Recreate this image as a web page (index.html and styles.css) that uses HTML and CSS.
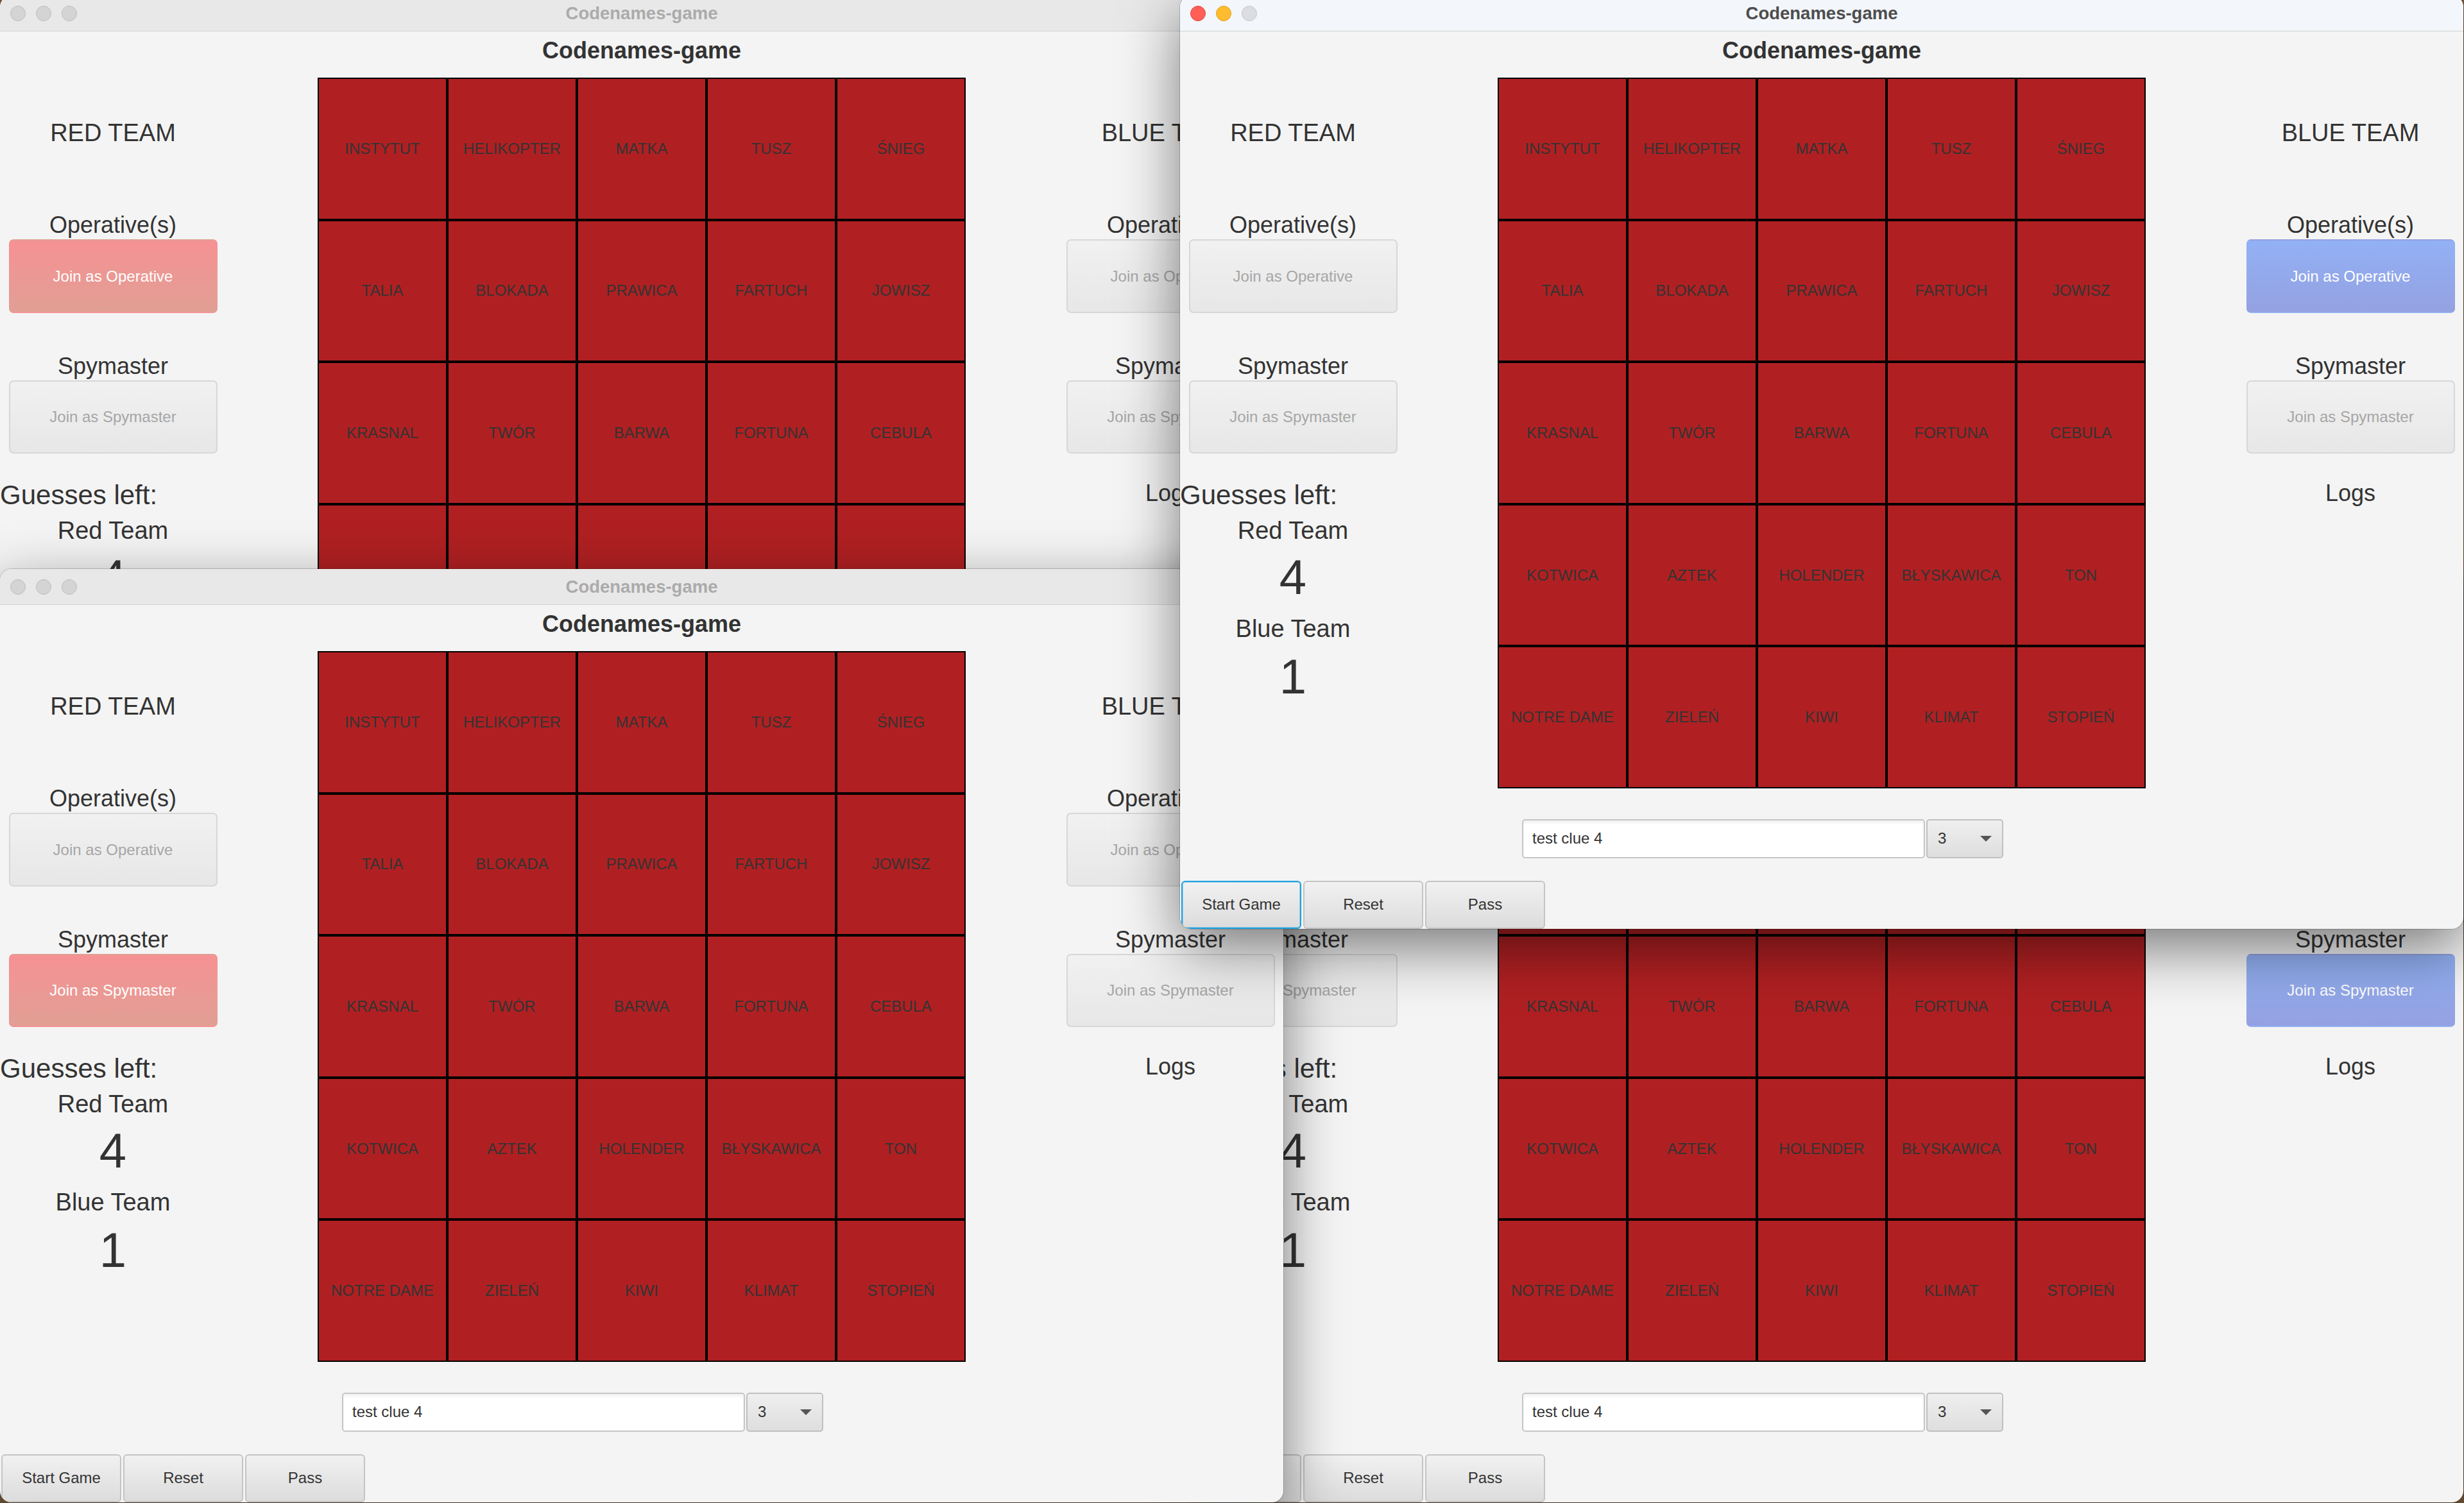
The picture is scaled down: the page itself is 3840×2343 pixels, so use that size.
FILE: index.html
```html
<!DOCTYPE html>
<html lang="pl">
<head>
<meta charset="utf-8">
<title>Codenames-game</title>
<link rel="stylesheet" href="styles.css">
</head>
<body>

<!-- Window A (back, top-left) -->
<div class="win win-a">
  <div class="titlebar">
    <div class="lights"><span class="light"></span><span class="light"></span><span class="light"></span></div>
    <div class="title">Codenames-game</div>
  </div>
  <div class="content">
    <div class="heading">Codenames-game</div>
    <div class="main">
      <div class="side">
        <div class="team">RED TEAM</div>
        <div class="label op-label">Operative(s)</div>
        <div class="join join--red">Join as Operative</div>
        <div class="label spy-label">Spymaster</div>
        <div class="join">Join as Spymaster</div>
        <div class="guesses">Guesses left:</div>
        <div class="label gt gt-red">Red Team</div>
        <div class="count count-red">4</div>
        <div class="label gt gt-blue">Blue Team</div>
        <div class="count count-blue">1</div>
      </div>
      <div class="board">
        <div class="cell">INSTYTUT</div><div class="cell">HELIKOPTER</div><div class="cell">MATKA</div><div class="cell">TUSZ</div><div class="cell">ŚNIEG</div>
        <div class="cell">TALIA</div><div class="cell">BLOKADA</div><div class="cell">PRAWICA</div><div class="cell">FARTUCH</div><div class="cell">JOWISZ</div>
        <div class="cell">KRASNAL</div><div class="cell">TWÓR</div><div class="cell">BARWA</div><div class="cell">FORTUNA</div><div class="cell">CEBULA</div>
        <div class="cell">KOTWICA</div><div class="cell">AZTEK</div><div class="cell">HOLENDER</div><div class="cell">BŁYSKAWICA</div><div class="cell">TON</div>
        <div class="cell">NOTRE DAME</div><div class="cell">ZIELEŃ</div><div class="cell">KIWI</div><div class="cell">KLIMAT</div><div class="cell">STOPIEŃ</div>
      </div>
      <div class="side">
        <div class="team">BLUE TEAM</div>
        <div class="label op-label">Operative(s)</div>
        <div class="join">Join as Operative</div>
        <div class="label spy-label">Spymaster</div>
        <div class="join">Join as Spymaster</div>
        <div class="label logs">Logs</div>
      </div>
    </div>
    <div class="clue">
      <div class="clue-input">test clue 4</div>
      <div class="combo"><span>3</span><span class="arrow"></span></div>
    </div>
    <div class="actions">
      <div class="act">Start Game</div><div class="act">Reset</div><div class="act">Pass</div>
    </div>
  </div>
</div>

<!-- Window D (bottom-right) -->
<div class="win win-d">
  <div class="titlebar">
    <div class="lights"><span class="light"></span><span class="light"></span><span class="light"></span></div>
    <div class="title">Codenames-game</div>
  </div>
  <div class="content">
    <div class="heading">Codenames-game</div>
    <div class="main">
      <div class="side">
        <div class="team">RED TEAM</div>
        <div class="label op-label">Operative(s)</div>
        <div class="join">Join as Operative</div>
        <div class="label spy-label">Spymaster</div>
        <div class="join">Join as Spymaster</div>
        <div class="guesses">Guesses left:</div>
        <div class="label gt gt-red">Red Team</div>
        <div class="count count-red">4</div>
        <div class="label gt gt-blue">Blue Team</div>
        <div class="count count-blue">1</div>
      </div>
      <div class="board">
        <div class="cell">INSTYTUT</div><div class="cell">HELIKOPTER</div><div class="cell">MATKA</div><div class="cell">TUSZ</div><div class="cell">ŚNIEG</div>
        <div class="cell">TALIA</div><div class="cell">BLOKADA</div><div class="cell">PRAWICA</div><div class="cell">FARTUCH</div><div class="cell">JOWISZ</div>
        <div class="cell">KRASNAL</div><div class="cell">TWÓR</div><div class="cell">BARWA</div><div class="cell">FORTUNA</div><div class="cell">CEBULA</div>
        <div class="cell">KOTWICA</div><div class="cell">AZTEK</div><div class="cell">HOLENDER</div><div class="cell">BŁYSKAWICA</div><div class="cell">TON</div>
        <div class="cell">NOTRE DAME</div><div class="cell">ZIELEŃ</div><div class="cell">KIWI</div><div class="cell">KLIMAT</div><div class="cell">STOPIEŃ</div>
      </div>
      <div class="side">
        <div class="team">BLUE TEAM</div>
        <div class="label op-label">Operative(s)</div>
        <div class="join">Join as Operative</div>
        <div class="label spy-label">Spymaster</div>
        <div class="join join--blue">Join as Spymaster</div>
        <div class="label logs">Logs</div>
      </div>
    </div>
    <div class="clue">
      <div class="clue-input">test clue 4</div>
      <div class="combo"><span>3</span><span class="arrow"></span></div>
    </div>
    <div class="actions">
      <div class="act">Start Game</div><div class="act">Reset</div><div class="act">Pass</div>
    </div>
  </div>
</div>

<!-- Window C (bottom-left) -->
<div class="win win-c">
  <div class="titlebar">
    <div class="lights"><span class="light"></span><span class="light"></span><span class="light"></span></div>
    <div class="title">Codenames-game</div>
  </div>
  <div class="content">
    <div class="heading">Codenames-game</div>
    <div class="main">
      <div class="side">
        <div class="team">RED TEAM</div>
        <div class="label op-label">Operative(s)</div>
        <div class="join">Join as Operative</div>
        <div class="label spy-label">Spymaster</div>
        <div class="join join--red">Join as Spymaster</div>
        <div class="guesses">Guesses left:</div>
        <div class="label gt gt-red">Red Team</div>
        <div class="count count-red">4</div>
        <div class="label gt gt-blue">Blue Team</div>
        <div class="count count-blue">1</div>
      </div>
      <div class="board">
        <div class="cell">INSTYTUT</div><div class="cell">HELIKOPTER</div><div class="cell">MATKA</div><div class="cell">TUSZ</div><div class="cell">ŚNIEG</div>
        <div class="cell">TALIA</div><div class="cell">BLOKADA</div><div class="cell">PRAWICA</div><div class="cell">FARTUCH</div><div class="cell">JOWISZ</div>
        <div class="cell">KRASNAL</div><div class="cell">TWÓR</div><div class="cell">BARWA</div><div class="cell">FORTUNA</div><div class="cell">CEBULA</div>
        <div class="cell">KOTWICA</div><div class="cell">AZTEK</div><div class="cell">HOLENDER</div><div class="cell">BŁYSKAWICA</div><div class="cell">TON</div>
        <div class="cell">NOTRE DAME</div><div class="cell">ZIELEŃ</div><div class="cell">KIWI</div><div class="cell">KLIMAT</div><div class="cell">STOPIEŃ</div>
      </div>
      <div class="side">
        <div class="team">BLUE TEAM</div>
        <div class="label op-label">Operative(s)</div>
        <div class="join">Join as Operative</div>
        <div class="label spy-label">Spymaster</div>
        <div class="join">Join as Spymaster</div>
        <div class="label logs">Logs</div>
      </div>
    </div>
    <div class="clue">
      <div class="clue-input">test clue 4</div>
      <div class="combo"><span>3</span><span class="arrow"></span></div>
    </div>
    <div class="actions">
      <div class="act">Start Game</div><div class="act">Reset</div><div class="act">Pass</div>
    </div>
  </div>
</div>

<!-- Window B (front, active, top-right) -->
<div class="win win-b win--active">
  <div class="titlebar">
    <div class="lights"><span class="light light--close"></span><span class="light light--min"></span><span class="light light--zoom"></span></div>
    <div class="title">Codenames-game</div>
  </div>
  <div class="content">
    <div class="heading">Codenames-game</div>
    <div class="main">
      <div class="side">
        <div class="team">RED TEAM</div>
        <div class="label op-label">Operative(s)</div>
        <div class="join">Join as Operative</div>
        <div class="label spy-label">Spymaster</div>
        <div class="join">Join as Spymaster</div>
        <div class="guesses">Guesses left:</div>
        <div class="label gt gt-red">Red Team</div>
        <div class="count count-red">4</div>
        <div class="label gt gt-blue">Blue Team</div>
        <div class="count count-blue">1</div>
      </div>
      <div class="board">
        <div class="cell">INSTYTUT</div><div class="cell">HELIKOPTER</div><div class="cell">MATKA</div><div class="cell">TUSZ</div><div class="cell">ŚNIEG</div>
        <div class="cell">TALIA</div><div class="cell">BLOKADA</div><div class="cell">PRAWICA</div><div class="cell">FARTUCH</div><div class="cell">JOWISZ</div>
        <div class="cell">KRASNAL</div><div class="cell">TWÓR</div><div class="cell">BARWA</div><div class="cell">FORTUNA</div><div class="cell">CEBULA</div>
        <div class="cell">KOTWICA</div><div class="cell">AZTEK</div><div class="cell">HOLENDER</div><div class="cell">BŁYSKAWICA</div><div class="cell">TON</div>
        <div class="cell">NOTRE DAME</div><div class="cell">ZIELEŃ</div><div class="cell">KIWI</div><div class="cell">KLIMAT</div><div class="cell">STOPIEŃ</div>
      </div>
      <div class="side">
        <div class="team">BLUE TEAM</div>
        <div class="label op-label">Operative(s)</div>
        <div class="join join--blue">Join as Operative</div>
        <div class="label spy-label">Spymaster</div>
        <div class="join">Join as Spymaster</div>
        <div class="label logs">Logs</div>
      </div>
    </div>
    <div class="clue">
      <div class="clue-input">test clue 4</div>
      <div class="combo"><span>3</span><span class="arrow"></span></div>
    </div>
    <div class="actions">
      <div class="act act--focus">Start Game</div><div class="act">Reset</div><div class="act">Pass</div>
    </div>
  </div>
</div>

</body>
</html>
```

FILE: styles.css
```css
* { box-sizing: border-box; margin: 0; padding: 0; }

html, body {
  width: 3840px;
  height: 2343px;
  overflow: hidden;
}

body {
  position: relative;
  background: #7a5b3e;
  font-family: "Liberation Sans", Arial, sans-serif;
  color: #333;
}

/* ---------- windows on the desktop ---------- */
.win {
  position: absolute;
  width: 2000px;
  height: 1455px;
  display: flex;
  flex-direction: column;
  background: #f4f4f4;
  border-radius: 18px;
  overflow: hidden;
  box-shadow: 0 0 0 1px rgba(0, 0, 0, 0.18), 0 30px 90px rgba(0, 0, 0, 0.5);
}
.win-a { left: 0; top: -7px; z-index: 1; }
.win-d { left: 1839px; top: 887px; z-index: 2; }
.win-c { left: 0; top: 887px; z-index: 3; }
.win-b { left: 1839px; top: -7px; z-index: 4; }

/* ---------- title bar ---------- */
.titlebar {
  position: relative;
  flex: none;
  height: 56px;
  display: flex;
  align-items: center;
  justify-content: center;
  background: #e9e8e9;
  border-bottom: 1px solid #d2d2d2;
}
.win--active .titlebar { background: #f3f6fb; }

.lights {
  position: absolute;
  left: 16px;
  top: 16px;
  display: flex;
  gap: 16px;
}
.light {
  width: 24px;
  height: 24px;
  border-radius: 50%;
  background: #d4d4d4;
  border: 1px solid #bdbdbd;
}
.light--close { background: #ff5f57; border-color: #e2463f; }
.light--min { background: #febc2e; border-color: #dfa023; }
.light--zoom { background: #dcdde0; border-color: #c6c7ca; }

.title {
  font-size: 27.5px;
  font-weight: bold;
  color: #ababab;
}
.win--active .title { color: #4d4d4d; }

/* ---------- content ---------- */
.content {
  flex: 1;
  display: flex;
  flex-direction: column;
  padding-top: 12px;
}

.heading {
  font-size: 36px;
  line-height: 36px;
  font-weight: bold;
  text-align: center;
  color: #333;
}

.main {
  display: grid;
  grid-template-columns: 352px 1010px 352px;
  justify-content: space-between;
  align-items: start;
  margin-top: 24px;
}

.side {
  display: flex;
  flex-direction: column;
  align-items: center;
}

.team {
  margin-top: 67px;
  font-size: 38px;
  line-height: 38px;
  color: #333;
}

.label {
  font-size: 36px;
  line-height: 36px;
  color: #333;
}
.op-label { margin-top: 107px; }
.spy-label { margin-top: 65px; }
.logs { margin-top: 44px; }

.join {
  width: 325px;
  height: 115px;
  margin-top: 4px;
  display: flex;
  align-items: center;
  justify-content: center;
  font-size: 24px;
  color: #a6a6a6;
  background: linear-gradient(#f1f1f1, #e7e7e7);
  border: 2px solid #d7d7d7;
  border-radius: 7px;
}
.spy-label + .join { height: 114px; }
.join--red {
  color: #fff;
  border-color: transparent;
  background: linear-gradient(#f69194, #e19f94);
}
.join--blue {
  color: #fff;
  border-color: transparent;
  background: linear-gradient(#92b1f5, #94a1e1);
}

.guesses {
  align-self: flex-start;
  margin-top: 44px;
  font-size: 42px;
  line-height: 42px;
  color: #333;
}
.gt {
  font-size: 38px;
  line-height: 38px;
}
.gt-red { margin-top: 15px; }
.gt-blue { margin-top: 23px; }

.count {
  font-size: 76px;
  line-height: 76px;
  color: #333;
}
.count-red { margin-top: 16px; }
.count-blue { margin-top: 18px; }

/* ---------- board ---------- */
.board {
  display: grid;
  grid-template-columns: repeat(5, 202px);
  grid-template-rows: repeat(5, 221.6px);
}
.cell {
  display: flex;
  align-items: center;
  justify-content: center;
  background: #b02022;
  border: 2px solid #000;
  font-size: 24px;
  color: #333;
  white-space: nowrap;
}

/* ---------- clue row ---------- */
.clue {
  display: flex;
  gap: 2px;
  height: 61px;
  margin: 48px 0 0 533px;
}
.clue-input {
  width: 628px;
  display: flex;
  align-items: center;
  padding-left: 14px;
  font-size: 24px;
  color: #333;
  background: #fff;
  border: 2px solid #c6c6c6;
  border-radius: 5px;
  box-shadow: inset 0 4px 4px rgba(0, 0, 0, 0.05);
}
.combo {
  width: 120px;
  display: flex;
  align-items: center;
  justify-content: space-between;
  padding: 0 16px 0 16px;
  font-size: 24px;
  color: #333;
  background: linear-gradient(#efefef, #dedede);
  border: 2px solid #c0c0c0;
  border-radius: 5px;
}
.arrow {
  width: 0;
  height: 0;
  border-left: 9px solid transparent;
  border-right: 9px solid transparent;
  border-top: 9px solid #555;
}

/* ---------- action buttons ---------- */
.actions {
  display: flex;
  gap: 3px;
  margin: 35px 0 0 2px;
}
.act {
  width: 187px;
  height: 75px;
  display: flex;
  align-items: center;
  justify-content: center;
  font-size: 24px;
  color: #333;
  background: linear-gradient(#f1f1f1, #dcdcdc);
  border: 2px solid #c4c4c4;
  border-radius: 6px;
}
.act--focus {
  border-color: #1ca2e0;
  box-shadow: inset 0 0 0 1px rgba(28, 162, 224, 0.35);
}
```
